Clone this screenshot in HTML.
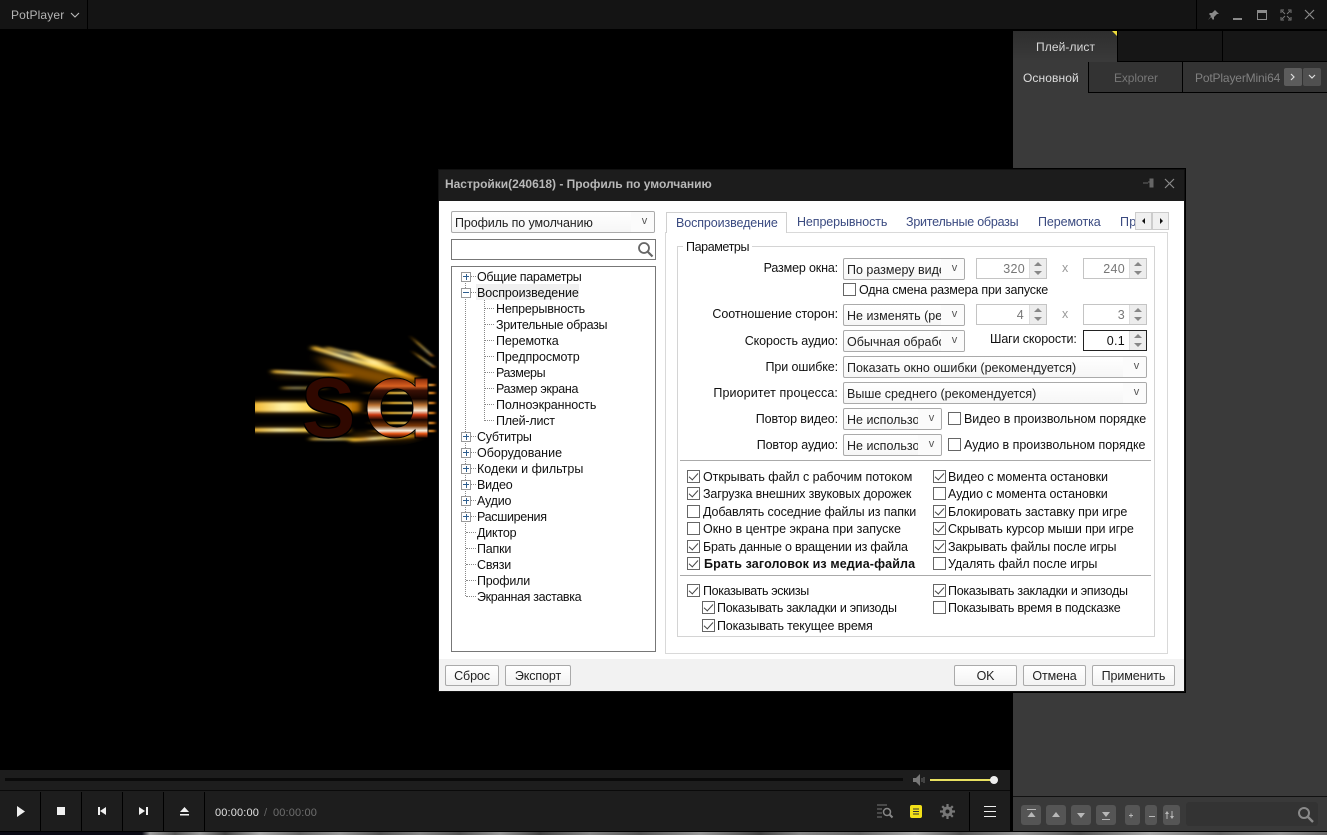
<!DOCTYPE html>
<html lang="ru"><head><meta charset="utf-8"><title>PotPlayer</title>
<style>
html,body{margin:0;padding:0;background:#000}
#r{position:relative;width:1327px;height:835px;overflow:hidden;background:#000;font:12.5px/16px "Liberation Sans",sans-serif;color:#111}
#r div,#r span,#r svg{position:absolute;box-sizing:border-box}
.t{white-space:nowrap;letter-spacing:-.1px}
.tr{white-space:nowrap;text-align:right;letter-spacing:-.1px}
.c{background:linear-gradient(#fff,#f6f6f6);border:1px solid #aaa;border-radius:2px;height:22px;padding:3px 0 0 3px;white-space:nowrap;overflow:hidden;color:#222}
.c i{position:absolute;box-sizing:border-box;right:0;top:0;bottom:0;width:23px;padding-left:4px;text-align:center;background:#fbfbfb;font:11px/18px "Liberation Sans",sans-serif;color:#555}
.s{background:#fff;border:1px solid #c4c4c4;height:21px;color:#777;text-align:right;padding:2px 21px 0 0;letter-spacing:.3px}
.sb{position:absolute;right:0;top:0;bottom:0;width:17px;background:#ededed;border-left:1px solid #ddd}
.sb:before{content:"";position:absolute;left:4px;top:3px;border:4px solid transparent;border-top:0;border-bottom:4px solid #888}
.sb:after{content:"";position:absolute;left:4px;bottom:3px;border:4px solid transparent;border-bottom:0;border-top:4px solid #888}
.k{width:13px;height:13px;border:1px solid #666;background:#fff}
.k.on:after{content:"";position:absolute;left:3px;top:0;width:4px;height:8px;border:solid #444;border-width:0 1.2px 1.2px 0;transform:rotate(42deg)}
.b{background:linear-gradient(#fff,#f3f3f3);border:1px solid #aaa;border-radius:2px;height:21px;text-align:center;padding-top:2px;letter-spacing:-.1px;color:#222}
.pl{width:10px;height:10px;border:1px solid #999;background:#fff}
.pl:before{content:"";position:absolute;left:1px;top:3px;width:6px;height:1px;background:#2f5f8f}
.pl.x:after{content:"";position:absolute;left:4px;top:1px;width:1px;height:6px;background:#2f5f8f}
.dh{height:1px;border-top:1px dotted #888}
.dv{width:1px;border-left:1px dotted #888}
.pb{background:#555;border-radius:3px;height:20px}
.tb{color:#3a4a80}
</style></head><body><div id="r">

<!-- top bar -->
<div style="left:0;top:0;width:1327px;height:30px;background:#141414;border-bottom:1px solid #000"></div>
<div class="t" style="left:11px;top:7px;color:#b4b4b4;font-size:12px;letter-spacing:.15px">PotPlayer</div>
<svg style="left:70px;top:11px" width="10" height="8"><path d="M1 2l4 4 4-4" fill="none" stroke="#bbb" stroke-width="1.100"/></svg>
<div style="left:87px;top:0;width:1px;height:30px;background:#000"></div>
<div style="left:1196px;top:0;width:1px;height:30px;background:#000"></div>
<svg style="left:1206px;top:8px" width="14" height="14"><path d="M8 1l5 5-2 0-3 3 0 2-1 1-2-3-3 3 3-4-2-2 1-1 2 0 3-3z" fill="#8a8a8a"/></svg>
<div style="left:1233px;top:18px;width:9px;height:2px;background:#8a8a8a"></div>
<div style="left:1257px;top:10px;width:10px;height:10px;border:1px solid #8a8a8a;border-top-width:3px"></div>
<svg style="left:1280px;top:9px" width="12" height="12"><path d="M1 4V1h3M8 1h3v3M11 8v3H8M4 11H1V8M2 2l3 3M10 2L7 5M10 10L7 7M2 10l3-3" fill="none" stroke="#777"/></svg>
<svg style="left:1304px;top:9px" width="12" height="12"><path d="M1 1l9 9M10 1l-9 9" stroke="#8a8a8a" stroke-width="1.200"/></svg>

<!-- right panel -->
<div style="left:1013px;top:31px;width:314px;height:800px;background:#3a3a3a"></div>
<div style="left:1013px;top:31px;width:104px;height:31px;background:linear-gradient(#2e2e2e,#3a3a3a)"></div>
<div style="left:1117px;top:31px;width:210px;height:31px;background:#161616;border-left:1px solid #000;border-bottom:1px solid #000"></div>
<div style="left:1222px;top:31px;width:1px;height:30px;background:#000"></div>
<svg style="left:1112px;top:31px" width="6" height="6"><path d="M0 0h5v5z" fill="#eedc3a"/></svg>
<div class="t" style="left:1036px;top:39px;color:#d8d8d8;font-size:12px;letter-spacing:.1px">Плей-лист</div>
<div style="left:1013px;top:62px;width:75px;height:31px;background:#3a3a3a"></div>
<div style="left:1088px;top:62px;width:239px;height:31px;background:#333;border-left:1px solid #000;border-bottom:1px solid #000"></div>
<div style="left:1182px;top:62px;width:1px;height:30px;background:#000"></div>
<div class="t" style="left:1023px;top:70px;color:#ddd;font-size:12px;letter-spacing:.1px">Основной</div>
<div class="t" style="left:1114px;top:70px;color:#777;font-size:12px">Explorer</div>
<div class="t" style="left:1195px;top:70px;color:#808080;font-size:12px;letter-spacing:-.15px">PotPlayerMini64</div>
<div style="left:1284px;top:68px;width:18px;height:18px;background:#5c5c5c;border-radius:2px"></div>
<svg style="left:1289px;top:73px" width="8" height="8"><path d="M2 1l3 3-3 3" fill="none" stroke="#ddd" stroke-width="1.200"/></svg>
<div style="left:1303px;top:68px;width:18px;height:18px;background:#505050;border-radius:2px"></div>
<svg style="left:1308px;top:74px" width="8" height="6"><path d="M1 1l3 3 3-3" fill="none" stroke="#ddd" stroke-width="1.200"/></svg>
<div style="left:1013px;top:796px;width:314px;height:1px;background:#111"></div>
<div style="left:1013px;top:797px;width:314px;height:34px;background:#393939"></div>
<div class="pb" style="left:1021px;top:805px;width:20px"></div>
<div class="pb" style="left:1046px;top:805px;width:20px"></div>
<div class="pb" style="left:1071px;top:805px;width:20px"></div>
<div class="pb" style="left:1096px;top:805px;width:20px"></div>
<div class="pb" style="left:1125px;top:805px;width:15px"></div>
<div class="pb" style="left:1145px;top:805px;width:12px"></div>
<div class="pb" style="left:1163px;top:805px;width:17px"></div>
<svg style="left:1021px;top:805px" width="160" height="20" fill="#b8b8b8"><path d="M6 4h9v1H6zM10.500 7l4 5h-8z"/><path d="M31 12l4-5 4 5z"/><path d="M56 8h8l-4 5z"/><path d="M81 7h8l-4 5zM81 14h8v1h-8z"/><path d="M108 10h4v1h-4zM109.500 8.500h1v4h-1zM128 11h6v1h-6z"/><path d="M146 6l-2 3h1.500v5h1V9H148zM151 14l2-3h-1.500V6h-1v5H149z"/></svg>
<div style="left:1186px;top:802px;width:132px;height:24px;background:#333;border-radius:3px"></div>
<svg style="left:1297px;top:806px" width="18" height="18"><circle cx="7" cy="7" r="5" fill="none" stroke="#8a8a8a" stroke-width="2"/><path d="M11 11l5 5" stroke="#8a8a8a" stroke-width="2.400"/></svg>

<!-- fire -->
<svg style="left:240px;top:330px" width="200" height="130">
<defs>
<filter id="h" x="-30%" y="-100%" width="160%" height="300%"><feGaussianBlur stdDeviation="5 3"/></filter>
<filter id="f1" x="-20%" y="-200%" width="140%" height="500%"><feGaussianBlur stdDeviation="3 1.300"/></filter>
<filter id="f2" x="-20%" y="-200%" width="140%" height="500%"><feGaussianBlur stdDeviation="1.500 .8"/></filter>
<linearGradient id="g1" x1="0" x2="1"><stop offset="0" stop-color="#f0b020"/><stop offset=".3" stop-color="#fff2a8"/><stop offset=".7" stop-color="#ffc828"/><stop offset="1" stop-color="#e08000" stop-opacity=".6"/></linearGradient>
<linearGradient id="g3" x1="0" x2="1"><stop offset="0" stop-color="#b06000" stop-opacity="0"/><stop offset=".4" stop-color="#ffc030"/><stop offset=".8" stop-color="#fff0a0"/><stop offset="1" stop-color="#ff8000"/></linearGradient>
<linearGradient id="g2" gradientUnits="userSpaceOnUse" x1="0" y1="47" x2="0" y2="108">
<stop offset="0" stop-color="#300800"/><stop offset=".06" stop-color="#a03a10"/><stop offset=".15" stop-color="#d86020"/><stop offset=".22" stop-color="#3a1005"/><stop offset=".36" stop-color="#140400"/><stop offset=".46" stop-color="#b87030"/><stop offset=".55" stop-color="#f8ecd8"/><stop offset=".62" stop-color="#c83810"/><stop offset=".7" stop-color="#1a0500"/><stop offset=".8" stop-color="#7a3808"/><stop offset=".88" stop-color="#f8f0e0"/><stop offset=".93" stop-color="#e05010"/><stop offset="1" stop-color="#200600"/>
</linearGradient>
<clipPath id="cp"><path d="M15 0H197V108L150 118H15z"/></clipPath>
</defs>
<g clip-path="url(#cp)">
<g filter="url(#h)">
<path d="M75 26L175 48 178 62 100 46z" fill="#d88008" opacity=".6"/>
<rect x="15" y="71" width="105" height="11" fill="#b87008" opacity=".55"/>
<rect x="15" y="97" width="85" height="5" fill="#a06006" opacity=".4"/>
<rect x="35" y="43" width="60" height="4" fill="#905006" opacity=".35"/>
<path d="M110 104L180 100 175 110 115 112z" fill="#a06006" opacity=".45"/>
</g>
<g filter="url(#f1)" fill="url(#g1)">
<rect x="10" y="72" width="110" height="10"/>
<rect x="10" y="98" width="100" height="4"/>
<rect x="32" y="42" width="80" height="3" transform="rotate(3 70 44)"/>
<rect x="42" y="57" width="45" height="2" opacity=".7"/>
<rect x="70" y="30" width="105" height="4" transform="rotate(17 120 32)"/>
<rect x="110" y="36" width="70" height="5" transform="rotate(22 150 38)"/>
<rect x="85" y="25" width="70" height="2" transform="rotate(14 120 26)"/>
<rect x="110" y="106" width="72" height="3" transform="rotate(-4 150 108)"/>
<rect x="70" y="108" width="60" height="2"/>
</g>
<g filter="url(#f2)" fill="url(#g3)">
<rect x="120" y="62" width="75" height="2"/><rect x="125" y="72" width="70" height="2"/>
<rect x="120" y="82" width="75" height="2"/><rect x="125" y="92" width="70" height="2"/>
<rect x="125" y="100" width="70" height="2"/><rect x="145" y="54" width="50" height="2"/>
<rect x="165" y="14" width="32" height="2" transform="rotate(42 180 15)" opacity=".7"/>
<rect x="168" y="26" width="30" height="2" transform="rotate(36 180 27)" opacity=".7"/>
</g>
<text transform="translate(60,107) scale(.93,1)" font-family="Liberation Sans" font-weight="bold" font-size="110" fill="url(#g2)" stroke="#000" stroke-width="1.500">s</text>
<path fill-rule="evenodd" d="M155 48C139 48 127 61 127 78S139 108 155 108C163 108 170 105 175 100V108H188V48H175V56C170 51 163 48 155 48ZM157 59C166 59 173 67 173 78S166 97 157 97 141 89 141 78 148 59 157 59Z" fill="url(#g2)" stroke="#000"/>
</g>
</svg>

<!-- bottom controls -->
<div style="left:0;top:770px;width:1010px;height:20px;background:#1d1d1d"></div>
<div style="left:5px;top:778px;width:898px;height:3px;background:#0a0a0a"></div>
<svg style="left:912px;top:773px" width="14" height="14"><path d="M1 5h3l4-4v12l-4-4H1z" fill="#777"/><path d="M10 5v4M12 4v6" stroke="#666"/></svg>
<div style="left:930px;top:779px;width:62px;height:2px;background:#e8e060"></div>
<div style="left:990px;top:776px;width:8px;height:8px;border-radius:50%;background:#eee"></div>
<div style="left:0;top:790px;width:1010px;height:1px;background:#0a0a0a"></div>
<div style="left:0;top:791px;width:1010px;height:40px;background:#1d1d1d"></div>
<div style="left:40px;top:792px;width:1px;height:39px;background:#000"></div>
<div style="left:81px;top:792px;width:1px;height:39px;background:#000"></div>
<div style="left:122px;top:792px;width:1px;height:39px;background:#000"></div>
<div style="left:163px;top:792px;width:1px;height:39px;background:#000"></div>
<div style="left:204px;top:792px;width:1px;height:39px;background:#000"></div>
<div style="left:969px;top:792px;width:1px;height:39px;background:#000"></div>
<svg style="left:0;top:792px" width="200" height="38" fill="#f0f0f0"><path d="M17 14l8 5.500-8 5.500z"/><rect x="57" y="15" width="8" height="8"/><path d="M98 15h2v8h-2zM106 15v8l-6-4z"/><path d="M146 15h2v8h-2zM139 15v8l6-4z"/><path d="M180 20l4.500-5 4.500 5zM180 22h9v1.500h-9z"/></svg>
<div class="t" style="left:215px;top:805px;color:#e0e0e0;font-size:11px;letter-spacing:.15px">00:00:00</div>
<div class="t" style="left:264px;top:805px;color:#666;font-size:11px">/</div>
<div class="t" style="left:273px;top:805px;color:#6e6e6e;font-size:11px;letter-spacing:.15px">00:00:00</div>
<svg style="left:876px;top:804px" width="18" height="16"><path d="M1 1h10M1 5h5M1 9h5M1 13h5" stroke="#777"/><circle cx="11" cy="8" r="3.500" fill="none" stroke="#888" stroke-width="1.500"/><path d="M13.500 10.500l3 3" stroke="#888" stroke-width="2"/></svg>
<div style="left:910px;top:805px;width:12px;height:13px;background:#f2e018;border-radius:2px"></div>
<svg style="left:910px;top:805px" width="12" height="13"><path d="M3 4h6M3 6.500h6M3 9h6" stroke="#333"/></svg>
<svg style="left:940px;top:804px" width="15" height="15"><circle cx="7.500" cy="7.500" r="3.500" fill="none" stroke="#777" stroke-width="3"/><path d="M7.500 0v3M7.500 12v3M0 7.500h3M12 7.500h3M2.200 2.200l2 2M10.800 10.800l2 2M12.800 2.200l-2 2M4.200 10.800l-2 2" stroke="#777" stroke-width="2.200"/></svg>
<div style="left:984px;top:806px;width:12px;height:1px;background:#eee"></div>
<div style="left:984px;top:811px;width:12px;height:1px;background:#eee"></div>
<div style="left:984px;top:816px;width:12px;height:1px;background:#eee"></div>
<div style="left:0;top:832px;width:1327px;height:3px;background:linear-gradient(90deg,#0a0a14 0,#0a0a14 142px,#a0a0a0 150px,#555 175px,#999 200px,#444 225px,#aaa 260px,#666 300px,#999 340px,#555 380px,#888 420px,#555 460px,#999 500px,#444 540px,#888 590px,#555 640px,#999 700px,#444 760px,#888 800px,#666 860px,#aaa 915px,#555 960px,#999 1020px,#555 1080px,#aaa 1150px,#666 1220px,#999 1280px,#666 1327px)"></div>

<!-- dialog -->
<div style="left:437px;top:168px;width:749px;height:525px;background:#111;border:1px solid #000"></div>
<div style="left:439px;top:170px;width:745px;height:31px;background:#1c1c1c"></div>
<div style="left:439px;top:201px;width:745px;height:490px;background:#fff"></div>
<div style="left:439px;top:659px;width:745px;height:32px;background:#f2f2f2"></div>
<div class="t" style="left:445px;top:176px;color:#b8b8b8;font-weight:bold;font-size:12px;letter-spacing:-.02px">Настройки(240618) - Профиль по умолчанию</div>
<svg style="left:1142px;top:177px" width="14" height="12"><path d="M1 6h5M6 5h5M8 2h3v8H8z" stroke="#666" fill="#666"/></svg>
<svg style="left:1164px;top:178px" width="11" height="11"><path d="M1 1l9 9M10 1l-9 9" stroke="#8a8a8a" stroke-width="1.200"/></svg>

<div class="c" style="left:451px;top:211px;width:204px;letter-spacing:-.1px">Профиль по умолчанию<i>v</i></div>
<div style="left:451px;top:239px;width:205px;height:21px;border:1px solid #777;background:#fff"></div>
<svg style="left:637px;top:241px" width="17" height="17"><circle cx="7" cy="7" r="5" fill="none" stroke="#666" stroke-width="1.800"/><path d="M11 11l4.500 4.500" stroke="#666" stroke-width="2.200"/></svg>
<div style="left:451px;top:266px;width:205px;height:386px;border:1px solid #777;background:#fff"></div>

<div style="left:476px;top:284px;width:103px;height:16px;background:#f0f0f0"></div>
<div class="dv" style="left:465px;top:272px;height:324px"></div>
<div class="dv" style="left:484px;top:300px;height:121px"></div>
<div class="dh" style="left:470px;top:276px;width:6px"></div><div class="dh" style="left:470px;top:292px;width:6px"></div>
<div class="dh" style="left:485px;top:308px;width:9px"></div><div class="dh" style="left:485px;top:324px;width:9px"></div><div class="dh" style="left:485px;top:340px;width:9px"></div><div class="dh" style="left:485px;top:356px;width:9px"></div><div class="dh" style="left:485px;top:372px;width:9px"></div><div class="dh" style="left:485px;top:388px;width:9px"></div><div class="dh" style="left:485px;top:404px;width:9px"></div><div class="dh" style="left:485px;top:420px;width:9px"></div>
<div class="dh" style="left:470px;top:436px;width:6px"></div><div class="dh" style="left:470px;top:452px;width:6px"></div><div class="dh" style="left:470px;top:468px;width:6px"></div><div class="dh" style="left:470px;top:484px;width:6px"></div><div class="dh" style="left:470px;top:500px;width:6px"></div><div class="dh" style="left:470px;top:516px;width:6px"></div><div class="dh" style="left:466px;top:532px;width:10px"></div><div class="dh" style="left:466px;top:548px;width:10px"></div><div class="dh" style="left:466px;top:564px;width:10px"></div><div class="dh" style="left:466px;top:580px;width:10px"></div><div class="dh" style="left:466px;top:596px;width:10px"></div>
<div class="pl x" style="left:461px;top:272px"></div><div class="pl" style="left:461px;top:288px"></div><div class="pl x" style="left:461px;top:432px"></div><div class="pl x" style="left:461px;top:448px"></div><div class="pl x" style="left:461px;top:464px"></div><div class="pl x" style="left:461px;top:480px"></div><div class="pl x" style="left:461px;top:496px"></div><div class="pl x" style="left:461px;top:512px"></div>

<div class="t" style="left:477px;top:269px;letter-spacing:-.3px">Общие параметры</div>
<div class="t" style="left:477px;top:285px;letter-spacing:-.1px">Воспроизведение</div>
<div class="t" style="left:496px;top:301px;letter-spacing:-.2px">Непрерывность</div>
<div class="t" style="left:496px;top:317px;letter-spacing:-.3px">Зрительные образы</div>
<div class="t" style="left:496px;top:333px;letter-spacing:-.1px">Перемотка</div>
<div class="t" style="left:496px;top:349px;letter-spacing:-.1px">Предпросмотр</div>
<div class="t" style="left:496px;top:365px;letter-spacing:-.4px">Размеры</div>
<div class="t" style="left:496px;top:381px;letter-spacing:-.3px">Размер экрана</div>
<div class="t" style="left:496px;top:397px;letter-spacing:-.1px">Полноэкранность</div>
<div class="t" style="left:496px;top:413px;letter-spacing:-.2px">Плей-лист</div>
<div class="t" style="left:477px;top:429px;letter-spacing:-.3px">Субтитры</div>
<div class="t" style="left:477px;top:445px;letter-spacing:0">Оборудование</div>
<div class="t" style="left:477px;top:461px;letter-spacing:0">Кодеки и фильтры</div>
<div class="t" style="left:477px;top:477px;letter-spacing:-.2px">Видео</div>
<div class="t" style="left:477px;top:493px;letter-spacing:-.2px">Аудио</div>
<div class="t" style="left:477px;top:509px;letter-spacing:-.3px">Расширения</div>
<div class="t" style="left:477px;top:525px;letter-spacing:-.2px">Диктор</div>
<div class="t" style="left:477px;top:541px;letter-spacing:-.2px">Папки</div>
<div class="t" style="left:477px;top:557px;letter-spacing:-.2px">Связи</div>
<div class="t" style="left:477px;top:573px;letter-spacing:-.2px">Профили</div>
<div class="t" style="left:477px;top:589px;letter-spacing:-.35px">Экранная заставка</div>

<div class="b" style="left:445px;top:665px;width:54px">Сброс</div>
<div class="b" style="left:505px;top:665px;width:66px">Экспорт</div>
<div class="b" style="left:954px;top:665px;width:63px">OK</div>
<div class="b" style="left:1023px;top:665px;width:63px">Отмена</div>
<div class="b" style="left:1092px;top:665px;width:83px">Применить</div>

<!-- tabs -->
<div style="left:665px;top:232px;width:503px;height:422px;border:1px solid #d9d9d9;background:#fff"></div>
<div style="left:666px;top:212px;width:121px;height:21px;background:#fff;border:1px solid #d0d0d0;border-bottom:0"></div>
<div class="t tb" style="left:676px;top:215px;letter-spacing:-.1px">Воспроизведение</div>
<div class="t tb" style="left:797px;top:214px;letter-spacing:-.1px">Непрерывность</div>
<div class="t tb" style="left:906px;top:214px;letter-spacing:-.23px">Зрительные образы</div>
<div class="t tb" style="left:1038px;top:214px;letter-spacing:-.1px">Перемотка</div>
<div class="t tb" style="left:1120px;top:214px;letter-spacing:.3px">Пр</div>
<div style="left:1135px;top:212px;width:17px;height:18px;background:#f0f0f0;border:1px solid #ccc"></div>
<div style="left:1152px;top:212px;width:17px;height:18px;background:#f0f0f0;border:1px solid #ccc"></div>
<svg style="left:1135px;top:212px" width="34" height="18" fill="#111"><path d="M10 6v6l-3-3zM25 6v6l3-3z"/></svg>

<div style="left:677px;top:246px;width:478px;height:391px;border:1px solid #d4d4d4"></div>
<div class="t" style="left:683px;top:239px;background:#fff;padding:0 3px;letter-spacing:-.4px">Параметры</div>

<div class="tr" style="left:680px;width:158px;top:260px;letter-spacing:-.15px">Размер окна:</div>
<div class="c" style="left:843px;top:258px;width:122px">По размеру виде<i>v</i></div>
<div class="s" style="left:976px;top:258px;width:71px">320<div class="sb"></div></div>
<div class="t" style="left:1062px;top:260px;color:#999">x</div>
<div class="s" style="left:1083px;top:258px;width:64px">240<div class="sb"></div></div>
<div class="k" style="left:843px;top:283px"></div>
<div class="t" style="left:859px;top:282px;letter-spacing:-.17px">Одна смена размера при запуске</div>

<div class="tr" style="left:680px;width:158px;top:306px;letter-spacing:-.05px">Соотношение сторон:</div>
<div class="c" style="left:843px;top:304px;width:122px">Не изменять (ре<i>v</i></div>
<div class="s" style="left:976px;top:304px;width:71px;padding-right:22px">4<div class="sb"></div></div>
<div class="t" style="left:1062px;top:306px;color:#999">x</div>
<div class="s" style="left:1083px;top:304px;width:64px">3<div class="sb"></div></div>

<div class="tr" style="left:680px;width:158px;top:333px">Скорость аудио:</div>
<div class="c" style="left:843px;top:330px;width:122px">Обычная обрабс<i>v</i></div>
<div class="t" style="left:990px;top:331px;letter-spacing:-.13px">Шаги скорости:</div>
<div class="s" style="left:1083px;top:330px;width:64px;border-color:#222;color:#111">0.1<div class="sb"></div></div>

<div class="tr" style="left:680px;width:158px;top:359px">При ошибке:</div>
<div class="c" style="left:843px;top:356px;width:304px">Показать окно ошибки (рекомендуется)<i>v</i></div>
<div class="tr" style="left:680px;width:158px;top:385px;letter-spacing:.1px">Приоритет процесса:</div>
<div class="c" style="left:843px;top:382px;width:304px">Выше среднего (рекомендуется)<i>v</i></div>
<div class="tr" style="left:680px;width:158px;top:411px">Повтор видео:</div>
<div class="c" style="left:843px;top:408px;width:99px">Не использо<i>v</i></div>
<div class="k" style="left:948px;top:412px"></div>
<div class="t" style="left:964px;top:411px;letter-spacing:-.05px">Видео в произвольном порядке</div>
<div class="tr" style="left:680px;width:158px;top:437px">Повтор аудио:</div>
<div class="c" style="left:843px;top:434px;width:99px">Не использо<i>v</i></div>
<div class="k" style="left:948px;top:438px"></div>
<div class="t" style="left:964px;top:437px;letter-spacing:-.03px">Аудио в произвольном порядке</div>

<div style="left:680px;top:460px;width:471px;height:1px;background:#aaa"></div>
<div style="left:680px;top:575px;width:471px;height:1px;background:#aaa"></div>

<div class="k on" style="left:687px;top:470px"></div><div class="t" style="left:703px;top:469px;letter-spacing:-.05px">Открывать файл с рабочим потоком</div>
<div class="k on" style="left:687px;top:487px"></div><div class="t" style="left:703px;top:486px;letter-spacing:-.15px">Загрузка внешних звуковых дорожек</div>
<div class="k" style="left:687px;top:505px"></div><div class="t" style="left:703px;top:504px;letter-spacing:-.1px">Добавлять соседние файлы из папки</div>
<div class="k" style="left:687px;top:522px"></div><div class="t" style="left:703px;top:521px;letter-spacing:-.01px">Окно в центре экрана при запуске</div>
<div class="k on" style="left:687px;top:540px"></div><div class="t" style="left:703px;top:539px;letter-spacing:-.23px">Брать данные о вращении из файла</div>
<div class="k on" style="left:687px;top:557px"></div><div class="t" style="left:704px;top:556px;font-weight:bold;letter-spacing:.13px">Брать заголовок из медиа-файла</div>
<div class="k on" style="left:687px;top:584px"></div><div class="t" style="left:703px;top:583px;letter-spacing:-.35px">Показывать эскизы</div>
<div class="k on" style="left:702px;top:601px"></div><div class="t" style="left:717px;top:600px;letter-spacing:-.25px">Показывать закладки и эпизоды</div>
<div class="k on" style="left:702px;top:619px"></div><div class="t" style="left:717px;top:618px;letter-spacing:-.18px">Показывать текущее время</div>

<div class="k on" style="left:933px;top:470px"></div><div class="t" style="left:948px;top:469px;letter-spacing:-.1px">Видео с момента остановки</div>
<div class="k" style="left:933px;top:487px"></div><div class="t" style="left:948px;top:486px;letter-spacing:-.06px">Аудио с момента остановки</div>
<div class="k on" style="left:933px;top:505px"></div><div class="t" style="left:948px;top:504px;letter-spacing:-.05px">Блокировать заставку при игре</div>
<div class="k on" style="left:933px;top:522px"></div><div class="t" style="left:948px;top:521px;letter-spacing:-.13px">Скрывать курсор мыши при игре</div>
<div class="k on" style="left:933px;top:540px"></div><div class="t" style="left:948px;top:539px;letter-spacing:-.22px">Закрывать файлы после игры</div>
<div class="k" style="left:933px;top:557px"></div><div class="t" style="left:948px;top:556px;letter-spacing:-.08px">Удалять файл после игры</div>
<div class="k on" style="left:933px;top:584px"></div><div class="t" style="left:948px;top:583px;letter-spacing:-.25px">Показывать закладки и эпизоды</div>
<div class="k" style="left:933px;top:601px"></div><div class="t" style="left:948px;top:600px;letter-spacing:-.25px">Показывать время в подсказке</div>

</div></body></html>
